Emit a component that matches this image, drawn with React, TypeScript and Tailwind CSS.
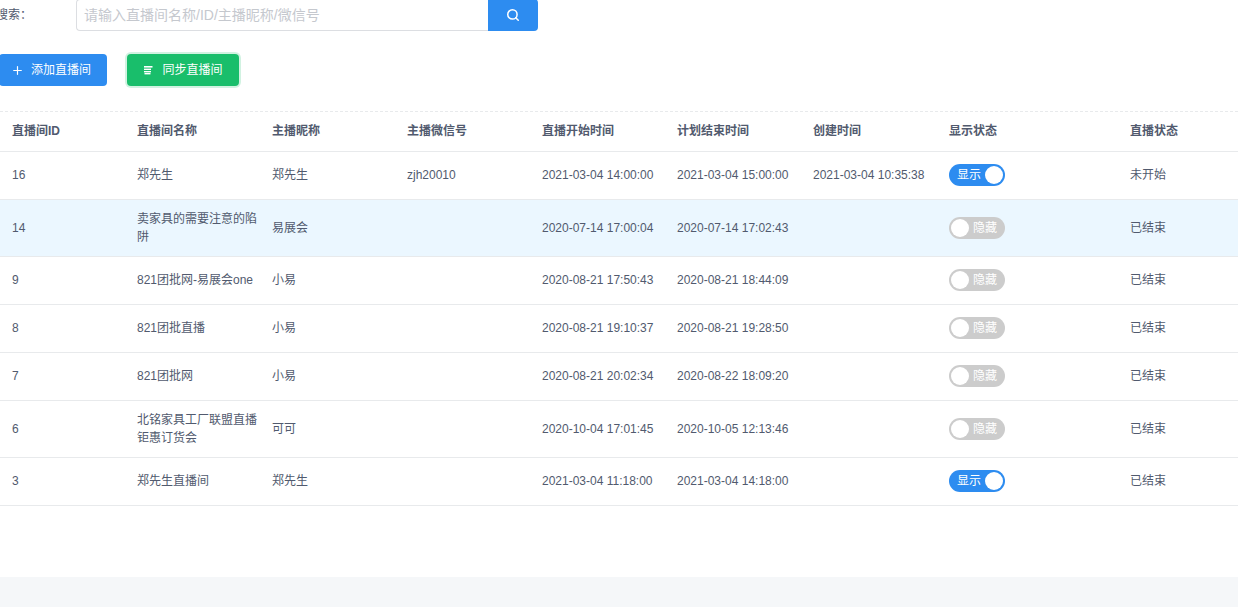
import { Plus, Search } from "lucide-react";

const FONT = "font-['Liberation_Sans','Noto_Sans_CJK_SC',sans-serif]";

type Row = {
  id: string; name: string; host: string; wx: string; start: string; end: string; created: string;
  on: boolean; status: string; tall?: boolean; hl?: boolean;
};

const rows: Row[] = [
  { id: "16", name: "郑先生", host: "郑先生", wx: "zjh20010", start: "2021-03-04 14:00:00", end: "2021-03-04 15:00:00", created: "2021-03-04 10:35:38", on: true, status: "未开始" },
  { id: "14", name: "卖家具的需要注意的陷阱", host: "易展会", wx: "", start: "2020-07-14 17:00:04", end: "2020-07-14 17:02:43", created: "", on: false, status: "已结束", hl: true, tall: true },
  { id: "9", name: "821团批网-易展会one", host: "小易", wx: "", start: "2020-08-21 17:50:43", end: "2020-08-21 18:44:09", created: "", on: false, status: "已结束" },
  { id: "8", name: "821团批直播", host: "小易", wx: "", start: "2020-08-21 19:10:37", end: "2020-08-21 19:28:50", created: "", on: false, status: "已结束" },
  { id: "7", name: "821团批网", host: "小易", wx: "", start: "2020-08-21 20:02:34", end: "2020-08-22 18:09:20", created: "", on: false, status: "已结束" },
  { id: "6", name: "北铭家具工厂联盟直播钜惠订货会", host: "可可", wx: "", start: "2020-10-04 17:01:45", end: "2020-10-05 12:13:46", created: "", on: false, status: "已结束", tall: true },
  { id: "3", name: "郑先生直播间", host: "郑先生", wx: "", start: "2021-03-04 11:18:00", end: "2021-03-04 14:18:00", created: "", on: true, status: "已结束" },
];

const headers = ["直播间ID", "直播间名称", "主播昵称", "主播微信号", "直播开始时间", "计划结束时间", "创建时间", "显示状态", "直播状态"];
const widths = ["w-[125px]", "w-[135px]", "w-[135px]", "w-[135px]", "w-[135px]", "w-[136px]", "w-[136px]", "w-[181px]", "w-[120px]"];

function Toggle({ on }: { on: boolean }) {
  if (on) {
    return (
      <div className="flex h-[22px] w-[56px] items-center justify-between rounded-full bg-[#2d8cf0] pl-[8px] pr-[2px] text-[12px] text-white">
        <span>显示</span>
        <span className="h-[18px] w-[18px] rounded-full bg-white" />
      </div>
    );
  }
  return (
    <div className="flex h-[22px] w-[56px] items-center justify-between rounded-full bg-[#cccccc] pl-[2px] pr-[8px] text-[12px] text-white">
      <span className="h-[18px] w-[18px] rounded-full bg-white" />
      <span>隐藏</span>
    </div>
  );
}

export default function App() {
  return (
    <div className={`${FONT} h-[607px] overflow-hidden bg-[#f5f7f9] text-[12px] text-[#515a6e]`}>
      <div className="h-[578px] bg-white">
        <div className="-mt-[1px] flex h-[32px] items-center">
          <label className="-ml-[4px] w-[80px] pb-[1px] text-[12px] whitespace-nowrap text-[#515a6e]">搜索：</label>
          <div className="flex h-[32px] w-[412px] items-center rounded-l-[4px] border border-[#dcdee2] border-r-0 pl-[7px] text-[14px] text-[#c5c8ce]">
            请输入直播间名称/ID/主播昵称/微信号
          </div>
          <button className="flex h-[32px] w-[50px] items-center justify-center rounded-r-[4px] bg-[#2d8cf0] text-white">
            <Search size={14} strokeWidth={2.6} />
          </button>
        </div>

        <div className="mt-[23px] flex h-[32px] items-center">
          <button className="-ml-[1px] flex h-[32px] w-[108px] items-center gap-[7px] rounded-[4px] bg-[#2d8cf0] pl-[12px] text-[12px] text-white">
            <Plus size={13} strokeWidth={2.2} />
            <span>添加直播间</span>
          </button>
          <button className="ml-[20px] flex h-[32px] w-[112px] items-center justify-center gap-[9px] rounded-[4px] bg-[#19be6b] text-[12px] text-white shadow-[0_0_0_2px_rgba(25,190,107,0.2)]">
            <svg width="10" height="10" viewBox="0 0 10 10" fill="currentColor">
              <rect x="1" y="1" width="8.5" height="1.6" />
              <rect x="1" y="3.6" width="7" height="1.4" />
              <rect x="1" y="6" width="7" height="1.4" />
              <rect x="1.5" y="8" width="6" height="1.4" />
            </svg>
            <span>同步直播间</span>
          </button>
        </div>

        <div className="mt-[25px] border-t border-dashed border-[#e8eaec]">
          <table className="w-[1238px] table-fixed border-collapse">
            <colgroup>
              {widths.map((w, i) => (
                <col key={i} className={w} />
              ))}
            </colgroup>
            <thead>
              <tr className="h-[39px] border-b border-[#e8eaec]">
                {headers.map((h) => (
                  <th key={h} className="pl-[12px] pr-[12px] text-left text-[12px] font-bold whitespace-nowrap text-[#515a6e]">
                    {h}
                  </th>
                ))}
              </tr>
            </thead>
            <tbody>
              {rows.map((r) => (
                <tr key={r.id} className={`border-b border-[#e8eaec] ${r.hl ? "bg-[#ebf7ff]" : "bg-white"} ${r.tall ? "h-[57px]" : "h-[48px]"}`}>
                  <td className="px-[12px]">{r.id}</td>
                  <td className="pl-[12px] pr-0 leading-[18px]">{r.name}</td>
                  <td className="px-[12px]">{r.host}</td>
                  <td className="px-[12px]">{r.wx}</td>
                  <td className="px-[12px] whitespace-nowrap">{r.start}</td>
                  <td className="px-[12px] whitespace-nowrap">{r.end}</td>
                  <td className="px-[12px] whitespace-nowrap">{r.created}</td>
                  <td className="px-[12px]"><Toggle on={r.on} /></td>
                  <td className="px-[12px]">{r.status}</td>
                </tr>
              ))}
            </tbody>
          </table>
        </div>
      </div>
    </div>
  );
}
